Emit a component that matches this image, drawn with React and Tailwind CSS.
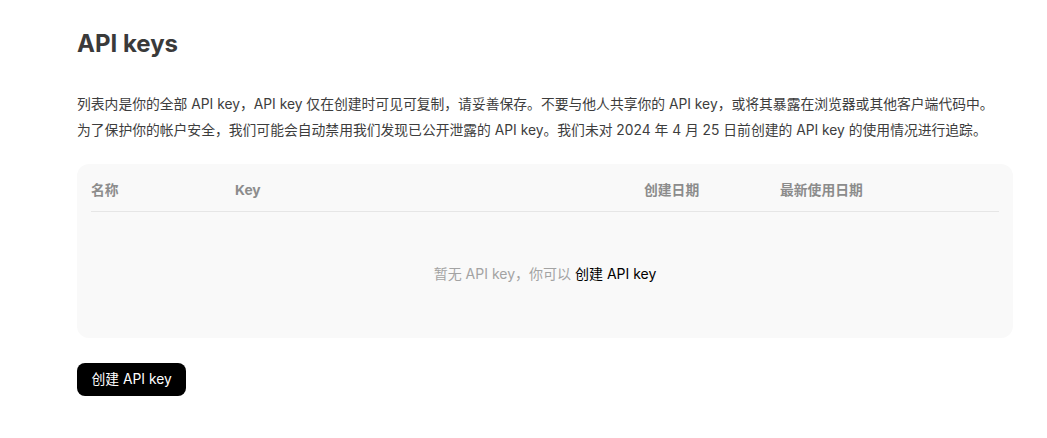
export default function App() {
    const font = { fontFamily: '"Inter", "Noto Sans CJK SC", sans-serif' };

    return (
        <main className="min-h-screen bg-white px-[77px] pt-7 text-[#333]" style={font}>
            <h1 className="text-[24px] font-bold leading-8 text-[#3a3a3a]">API keys</h1>

            <div className="mt-[31px] whitespace-nowrap text-[13.8px] leading-[26px] text-[#3d3d3d]">
                <p>列表内是你的全部 API key，API key 仅在创建时可见可复制，请妥善保存。不要与他人共享你的 API key，或将其暴露在浏览器或其他客户端代码中。</p>
                <p>为了保护你的帐户安全，我们可能会自动禁用我们发现已公开泄露的 API key。我们未对 2024 年 4 月 25 日前创建的 API key 的使用情况进行追踪。</p>
            </div>

            <div className="mt-[21px] w-[936px] rounded-xl bg-[#f9f9f9] px-[14px]">
                <div className="grid grid-cols-[144px_409px_136px_1fr] border-b border-[#e6e6e6] pt-4 pb-[11px] text-[13.8px] font-bold leading-5 text-[#8c8c8c]">
                    <div>名称</div>
                    <div>Key</div>
                    <div>创建日期</div>
                    <div>最新使用日期</div>
                </div>
                <div className="flex h-[126px] items-center justify-center pb-[3px] text-[14px] text-[#a3a3a3]">
                    <span>
                        暂无 API key，你可以 <span className="cursor-pointer text-black">创建 API key</span>
                    </span>
                </div>
            </div>

            <button className="mt-[25px] h-[33px] rounded-lg bg-black px-[14.5px] text-[13.8px] text-white">
                创建 API key
            </button>
        </main>
    );
}
